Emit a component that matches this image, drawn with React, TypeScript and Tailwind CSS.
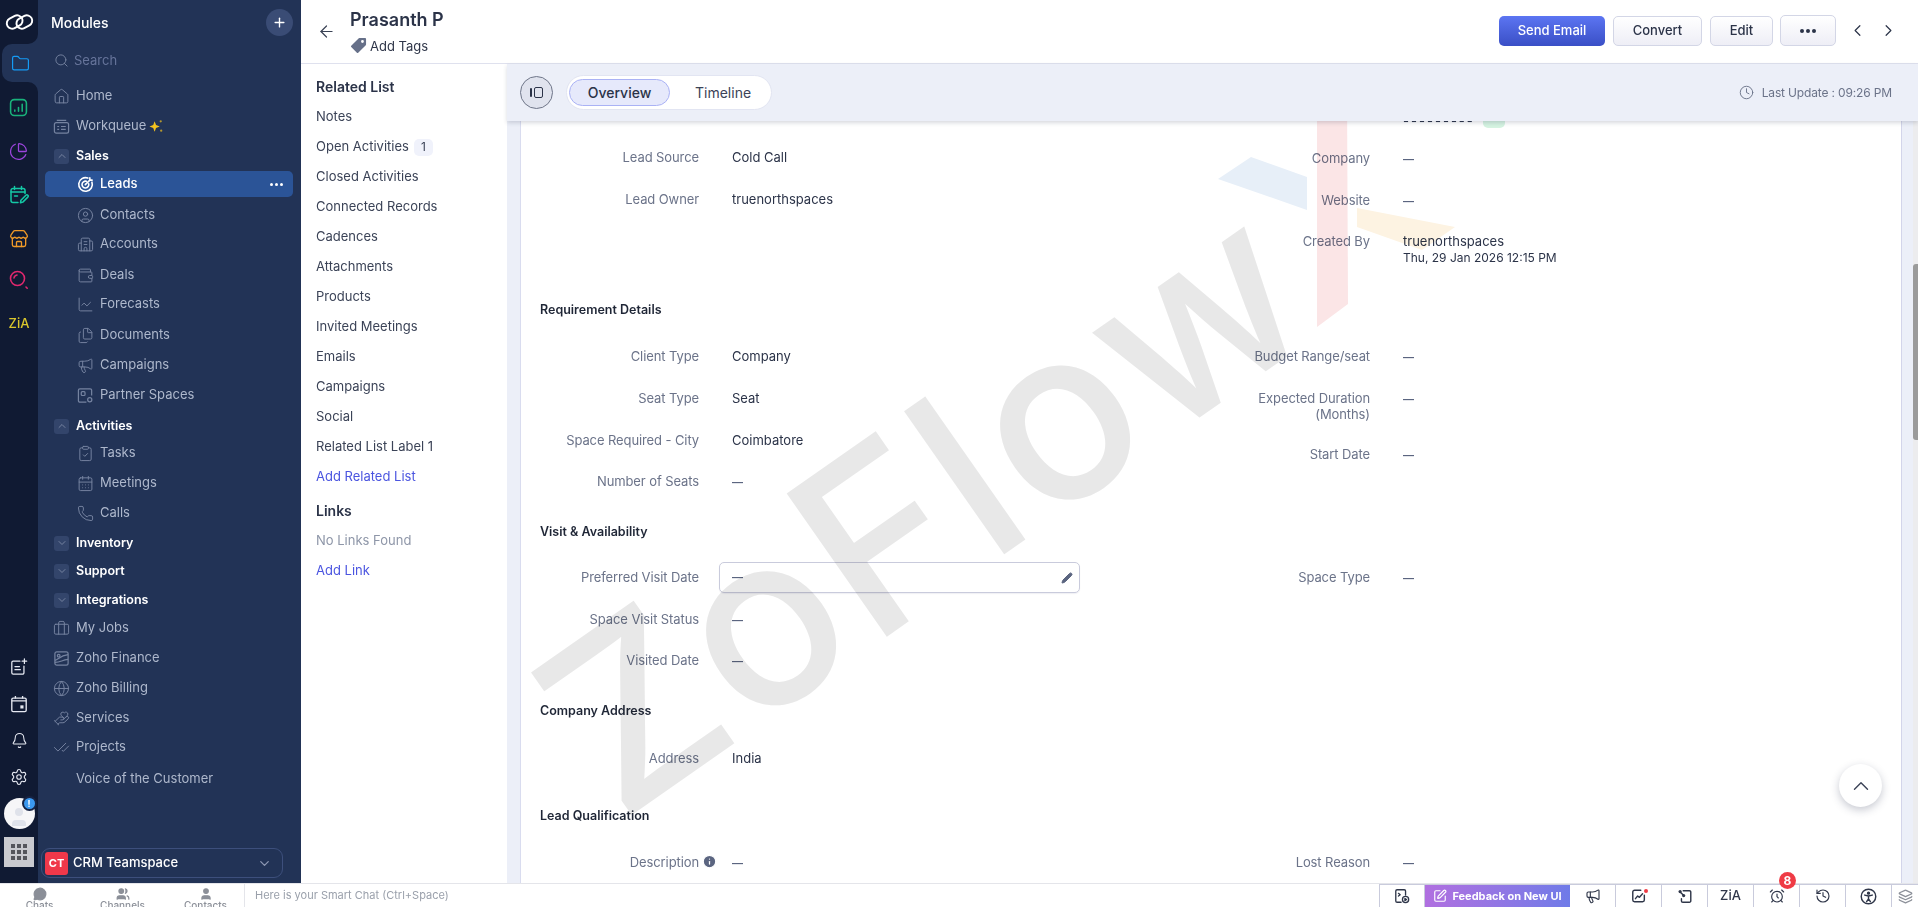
import {
  AlarmClock,
  ArrowLeft,
  Bell,
  Briefcase,
  Building2,
  CalendarDays,
  ChartLine,
  ChartPie,
  CheckCheck,
  ChevronDown,
  ChevronLeft,
  ChevronRight,
  ChevronUp,
  CircleUser,
  ClipboardCheck,
  Clock,
  Files,
  Folder,
  Globe,
  HandHeart,
  History,
  House,
  Info,
  Layers,
  Megaphone,
  MessageCircle,
  Pencil,
  Phone,
  Plus,
  Search,
  Settings,
  SquarePen,
  Store,
  User,
  Users,
  Wallet,
} from "lucide-react";
import type { ReactNode } from "react";

const font = "font-['Inter','Liberation_Sans',sans-serif]";

type NavItem = {
  label: string;
  icon?: ReactNode;
  cls?: string;
};

const iconCls = "h-[17px] w-[17px] stroke-[1.4] text-[#7583a0]";

function WorkqueueIcon() {
  return (
    <svg viewBox="0 0 18 18" className="h-[17px] w-[17px] text-[#7583a0]" fill="none" stroke="currentColor" strokeWidth="1.3">
      <path d="M4 2.500h10" />
      <rect x="1.500" y="5" width="15" height="11" rx="2" />
      <path d="M4.500 9h2M4.500 12h2M8.500 9h5M8.500 12h5" />
    </svg>
  );
}

function Sparkle() {
  return (
    <svg viewBox="0 0 16 16" className="ml-[3px] h-[15px] w-[15px] text-[#f2c21f]" fill="currentColor">
      <path d="M6 2.500 7.500 6.500 11.500 8 7.500 9.500 6 13.500 4.500 9.500 0.500 8 4.500 6.500z" />
      <circle cx="12.500" cy="2.500" r="1.200" opacity="0.7" />
      <circle cx="13" cy="12.500" r="1.200" opacity="0.7" />
    </svg>
  );
}

function LeadsIcon() {
  return (
    <svg viewBox="0 0 18 18" className="h-[17px] w-[17px] text-white" fill="none" stroke="currentColor" strokeWidth="1.700" strokeLinecap="round">
      <path d="M11.500 2.200A7.200 7.200 0 1 0 15.800 6.500" />
      <path d="M9.800 5.600A3.600 3.600 0 1 0 12.400 8.200" />
      <path d="M8.800 9.200 13.600 4.400M13.600 4.400V2M13.600 4.400H16" />
    </svg>
  );
}

function PartnerIcon() {
  return (
    <svg viewBox="0 0 18 18" className="h-[17px] w-[17px] text-[#7583a0]" fill="none" stroke="currentColor" strokeWidth="1.300">
      <path d="M10 16H3a1.500 1.500 0 0 1-1.500-1.500v-11A1.500 1.500 0 0 1 3 2h11a1.500 1.500 0 0 1 1.500 1.500V9" />
      <rect x="4.500" y="5" width="4" height="4" rx="1" />
      <circle cx="13.500" cy="13.500" r="2.200" />
    </svg>
  );
}

function FinanceIcon() {
  return (
    <svg viewBox="0 0 18 18" className="h-[17px] w-[17px] text-[#7583a0]" fill="none" stroke="currentColor" strokeWidth="1.300">
      <rect x="2" y="2" width="14" height="14" rx="2" />
      <path d="M2 11c4-1 5-5 14-6M2 13c6 0 7-2 14-3" />
      <circle cx="6" cy="6" r="1.400" />
    </svg>
  );
}

function RailChart() {
  return (
    <svg viewBox="0 0 18 18" className="h-[19px] w-[19px] text-[#19b27b]" fill="none" stroke="currentColor" strokeWidth="1.500" strokeLinecap="round">
      <rect x="1.500" y="1.500" width="15" height="15" rx="3.500" />
      <path d="M5.500 12.500v-1M9 12.500V9M12.500 12.500V6" />
    </svg>
  );
}

function RailCalendar() {
  return (
    <svg viewBox="0 0 20 20" className="h-5 w-5 text-[#14c9a6]" fill="none" stroke="currentColor" strokeWidth="1.500" strokeLinecap="round" strokeLinejoin="round">
      <path d="M9 17.500H4a2 2 0 0 1-2-2v-10a2 2 0 0 1 2-2h10a2 2 0 0 1 2 2v3" />
      <path d="M2 7h14M5.500 1.500v3M12.500 1.500v3M5.500 11h3" />
      <path d="m11.500 17.800.4-2.600 5-5a1.300 1.300 0 0 1 1.900 1.900l-5 5z" />
    </svg>
  );
}

function RailLens() {
  return (
    <svg viewBox="0 0 20 20" className="-mt-[3px] h-5 w-5 text-[#e0286e]" fill="none" stroke="currentColor" strokeWidth="1.600" strokeLinecap="round">
      <circle cx="8.500" cy="8.500" r="7" />
      <path d="M5 8a3.600 3.600 0 0 1 3-3M17 17l1.200 1.200" />
    </svg>
  );
}

function RailNote() {
  return (
    <svg viewBox="0 0 20 20" className="h-[18px] w-[18px] text-[#e6e9f2]" fill="none" stroke="currentColor" strokeWidth="1.400" strokeLinecap="round">
      <path d="M11 3.500H3.500a1.500 1.500 0 0 0-1.500 1.500v11.500A1.500 1.500 0 0 0 3.500 18H14a1.500 1.500 0 0 0 1.500-1.500V9" />
      <path d="M5.500 9.500h5M5.500 13h6M16 1v5M13.500 3.500h5" />
    </svg>
  );
}

function RailEvent() {
  return (
    <svg viewBox="0 0 20 20" className="h-[18px] w-[18px] text-[#e6e9f2]" fill="none" stroke="currentColor" strokeWidth="1.500">
      <rect x="2" y="3.500" width="16" height="15" rx="1.500" />
      <path d="M2 6.500h16M6 1v3M14 1v3" />
      <rect x="11.500" y="11.500" width="3.500" height="3.500" fill="currentColor" stroke="none" />
    </svg>
  );
}

function ZohoLogo() {
  return (
    <svg viewBox="0 0 30 20" className="h-[20px] w-[29px] text-white" fill="none" stroke="currentColor" strokeWidth="2">
      <rect x="1.500" y="4.500" width="17" height="11" rx="5.500" transform="rotate(-28 10 10)" />
      <rect x="11.500" y="4.500" width="17" height="11" rx="5.500" transform="rotate(-28 20 10)" />
    </svg>
  );
}

function TagIcon() {
  return (
    <svg viewBox="0 0 18 18" className="mr-[3px] h-[17px] w-[17px] fill-[#667089]">
      <path d="M10 1h6a1 1 0 0 1 1 1v6a1 1 0 0 1-.3.7l-8 8a1 1 0 0 1-1.400 0l-6-6a1 1 0 0 1 0-1.400l8-8A1 1 0 0 1 10 1zm3.200 2.300a1.500 1.500 0 1 0 0 3 1.500 1.500 0 0 0 0-3z" fillRule="evenodd" />
    </svg>
  );
}

const railTop = [
  <RailChart key="chart" />,
  <ChartPie key="pie" className="mt-[1px] h-[19px] w-[19px] stroke-[1.6] text-[#9b45dc]" />,
  <RailCalendar key="calendar" />,
  <Store key="store" className="h-5 w-5 stroke-[1.6] text-[#f09a28]" />,
  <RailLens key="lens" />,
];

const navTop: NavItem[] = [
  { label: "Home", icon: <House className={iconCls} /> },
  { label: "Workqueue", icon: <WorkqueueIcon /> },
];

const sales: NavItem[] = [
  { label: "Contacts", icon: <CircleUser className={iconCls} />, cls: "-mt-px" },
  { label: "Accounts", icon: <Building2 className={iconCls} />, cls: "-mt-px" },
  { label: "Deals", icon: <Wallet className={iconCls} />, cls: "mt-px" },
  { label: "Forecasts", icon: <ChartLine className={iconCls} />, cls: "-mt-px" },
  { label: "Documents", icon: <Files className={iconCls} />, cls: "mt-px" },
  { label: "Campaigns", icon: <Megaphone className={iconCls} /> },
  { label: "Partner Spaces", icon: <PartnerIcon /> },
];

const activities: NavItem[] = [
  { label: "Tasks", icon: <ClipboardCheck className={iconCls} />, cls: "-mt-[4px]" },
  { label: "Meetings", icon: <CalendarDays className={iconCls} /> },
  { label: "Calls", icon: <Phone className={iconCls} /> },
];

const navBottom: NavItem[] = [
  { label: "My Jobs", icon: <Briefcase className={iconCls} />, cls: "-mt-[3px]" },
  { label: "Zoho Finance", icon: <FinanceIcon /> },
  { label: "Zoho Billing", icon: <Globe className={iconCls} /> },
  { label: "Services", icon: <HandHeart className={iconCls} /> },
  { label: "Projects", icon: <CheckCheck className={iconCls} />, cls: "-mt-px" },
  { label: "Voice of the Customer", cls: "mt-[2px]" },
];

const relatedList = [
  "Notes",
  "Open Activities",
  "Closed Activities",
  "Connected Records",
  "Cadences",
  "Attachments",
  "Products",
  "Invited Meetings",
  "Emails",
  "Campaigns",
  "Social",
  "Related List Label 1",
];

function TopItem({ item, extra }: { item: NavItem; extra?: ReactNode }) {
  return (
    <div className={`flex h-[30px] items-center pt-[2px] ${item.cls ?? ""}`}>
      <span className="flex w-[18px] justify-center">{item.icon}</span>
      <span className="ml-[6px] text-[13px] text-[#aeb8cc]">{item.label}</span>
      {extra}
    </div>
  );
}

function SubItem({ item }: { item: NavItem }) {
  return (
    <div className={`flex h-[30px] items-center pl-[24px] pt-[2px] ${item.cls ?? ""}`}>
      <span className="flex w-[18px] justify-center">{item.icon}</span>
      <span className="ml-[6px] text-[13px] text-[#aeb8cc]">{item.label}</span>
    </div>
  );
}

function GroupItem({ label, open, cls }: { label: string; open?: boolean; cls?: string }) {
  return (
    <div className={`flex h-[30px] items-center ${cls ?? ""}`}>
      <span className="ml-[2px] flex h-[15px] w-[15px] items-center justify-center rounded-[3px] bg-[#33456b]">
        {open ? (
          <ChevronUp className="h-3 w-3 text-[#7583a0]" />
        ) : (
          <ChevronDown className="h-3 w-3 text-[#7583a0]" />
        )}
      </span>
      <span className="ml-[7px] text-[12.5px] font-semibold text-white">{label}</span>
    </div>
  );
}

function Sidebar() {
  return (
    <aside className="flex h-full w-[263px] flex-col bg-[#223356]">
      <div className="flex h-[44px] items-center justify-between pl-[13px] pr-[8px]">
        <span className="text-[14px] font-medium text-white">Modules</span>
        <span className="flex h-[27px] w-[27px] items-center justify-center rounded-full bg-[#3a4c75]">
          <Plus className="h-[15px] w-[15px] stroke-[2.2] text-white" />
        </span>
      </div>
      <div className="flex h-[32px] items-center pl-[16px] pt-[1px]">
        <Search className="h-[15px] w-[15px] stroke-[1.5] text-[#7583a0]" />
        <span className="ml-[5px] text-[13px] text-[#66749a]">Search</span>
      </div>
      <div className="flex flex-1 flex-col pl-[14px] pt-[4px]">
        {navTop.map((item) => (
          <TopItem
            key={item.label}
            item={item}
            extra={item.label === "Workqueue" ? <Sparkle /> : undefined}
          />
        ))}
        <GroupItem label="Sales" open cls="mt-px" />
        <div className="-ml-[7px] mb-[3px] mr-[8px] flex h-[26px] items-center rounded-[5px] bg-[#2b5497] pl-[31px]">
          <span className="flex w-[18px] justify-center">
            <LeadsIcon />
          </span>
          <span className="ml-[6px] text-[13px] font-medium text-white">Leads</span>
          <span className="ml-auto mr-[10px] flex gap-[2px]">
            <span className="h-[3px] w-[3px] rounded-full bg-white" />
            <span className="h-[3px] w-[3px] rounded-full bg-white" />
            <span className="h-[3px] w-[3px] rounded-full bg-white" />
          </span>
        </div>
        {sales.map((item) => (
          <SubItem key={item.label} item={item} />
        ))}
        <GroupItem label="Activities" open cls="mt-[2px]" />
        {activities.map((item) => (
          <SubItem key={item.label} item={item} />
        ))}
        <GroupItem label="Inventory" cls="mt-px" />
        <GroupItem label="Support" cls="-mt-[2px]" />
        <GroupItem label="Integrations" cls="-mt-px" />
        {navBottom.map((item) => (
          <TopItem key={item.label} item={item} />
        ))}
      </div>
      <div className="mb-[5px] ml-[3px] flex h-[30px] w-[242px] items-center rounded-[9px] border border-[#3d4f7c] pl-[3px] pr-[10px]">
        <span className="flex h-[23px] w-[23px] items-center justify-center rounded-[3px] bg-[#f0384a] text-[11px] font-bold text-white">
          CT
        </span>
        <span className="ml-[5px] text-[13px] font-medium text-white">CRM Teamspace</span>
        <ChevronDown className="ml-auto h-[15px] w-[15px] text-[#8d98b3]" />
      </div>
    </aside>
  );
}

function Rail() {
  return (
    <nav className="flex h-full w-[38px] flex-col bg-[#223356]">
      <div className="flex h-[44px] items-center justify-center rounded-br-[10px] bg-[#101a33]">
        <ZohoLogo />
      </div>
      <div className="bg-[#101a33]">
        <div className="ml-[2px] flex h-[38px] items-center justify-center rounded-l-[10px] bg-[#223356]">
          <Folder className="h-[19px] w-[19px] stroke-[1.5] text-[#159bf5]" />
        </div>
      </div>
      <div className="flex flex-1 flex-col items-center rounded-tr-[10px] bg-[#101a33]">
        <div className="mt-[16px] flex flex-col items-center gap-[24px]">
          {railTop}
          <span className="mt-[3px] text-[13px] font-medium leading-none text-[#d9c62c]">ZiA</span>
        </div>
        <div className="mt-auto flex flex-col items-center">
          <div className="flex flex-col items-center gap-[19px]">
            <RailNote />
            <RailEvent />
            <Bell className="h-[17px] w-[17px] stroke-[1.5] text-[#e6e9f2]" />
            <Settings className="h-[18px] w-[18px] stroke-[1.5] text-[#e6e9f2]" />
          </div>
          <div className="relative mt-[12px] flex h-[31px] w-[31px] items-end justify-center rounded-full bg-[#f6f6f8]">
            <User className="h-[24px] w-[24px] fill-[#dfe2ea] stroke-none" />
            <span className="absolute -right-[2px] -top-[2px] flex h-[15px] w-[15px] items-center justify-center rounded-full border-[2px] border-[#172444] bg-[#3b99f0] text-[9px] font-bold leading-none text-white">
              !
            </span>
          </div>
          <div className="mb-[16px] mt-[8px] grid h-[30px] w-[30px] grid-cols-3 content-center justify-center gap-[2px] bg-[#c9cacf] px-[7px]">
            {[0, 1, 2, 3, 4, 5, 6, 7, 8].map((n) => (
              <span key={n} className="h-[4px] w-[4px] bg-[#55565c]" />
            ))}
          </div>
        </div>
      </div>
    </nav>
  );
}

function Header() {
  return (
    <header className="flex h-[64px] shrink-0 items-center border-b border-[#dfe1ee] bg-white pl-[16px] pr-[20px]">
      <ArrowLeft className="h-[19px] w-[19px] stroke-[1.5] text-[#3a4255]" />
      <div className="ml-[14px] flex flex-col">
        <span className="-mt-[1px] text-[18px] font-semibold leading-[24px] text-[#2b3348]">Prasanth P</span>
        <span className="mt-[5px] flex items-center text-[13px] leading-[18px] text-[#2f3649]">
          <TagIcon />
          Add Tags
        </span>
      </div>
      <div className="ml-auto flex items-center pb-[2px]">
        <button className="h-[30px] w-[106px] rounded-[5px] bg-gradient-to-b from-[#5c75f2] to-[#3a4fc6] text-[13px] font-medium text-white">
          Send Email
        </button>
        <button className="ml-[8px] h-[30px] w-[89px] rounded-[5px] border border-[#d3d6e6] bg-gradient-to-b from-white to-[#eeeef6] text-[13px] font-medium text-[#2b3348]">
          Convert
        </button>
        <button className="ml-[8px] h-[30px] w-[63px] rounded-[5px] border border-[#d3d6e6] bg-gradient-to-b from-white to-[#eeeef6] text-[13px] font-medium text-[#2b3348]">
          Edit
        </button>
        <button className="ml-[7px] flex h-[31px] w-[56px] items-center justify-center gap-[2px] rounded-[5px] border border-[#d3d6e6] bg-gradient-to-b from-white to-[#eeeef6]">
          <span className="h-[4px] w-[4px] rounded-full bg-[#2b3348]" />
          <span className="h-[4px] w-[4px] rounded-full bg-[#2b3348]" />
          <span className="h-[4px] w-[4px] rounded-full bg-[#2b3348]" />
        </button>
        <ChevronLeft className="ml-[12px] h-[19px] w-[19px] stroke-[1.5] text-[#2b3348]" />
        <ChevronRight className="ml-[12px] h-[19px] w-[19px] stroke-[1.5] text-[#2b3348]" />
      </div>
    </header>
  );
}

function RelatedList() {
  return (
    <div className="w-[206px] shrink-0 bg-white pl-[15px] pt-[12px] text-[13px] text-[#3b4357]">
      <div className="flex h-[20px] items-center text-[14px] font-semibold text-[#2b3348]">Related List</div>
      <div className="mt-[6px]">
        {relatedList.map((name) => (
          <div key={name} className="flex h-[30px] items-center">
            {name}
            {name === "Open Activities" && (
              <span className="ml-[5px] flex h-[17px] w-[19px] items-center justify-center rounded-[5px] bg-[#f0f2fb] text-[12px]">
                1
              </span>
            )}
          </div>
        ))}
        <div className="flex h-[30px] items-center text-[#4b55e0]">Add Related List</div>
      </div>
      <div className="mt-[3px] flex h-[31px] items-center text-[14px] font-semibold text-[#2b3348]">Links</div>
      <div className="flex h-[30px] items-center text-[#8e96a8]">No Links Found</div>
      <div className="flex h-[30px] items-center text-[#4b55e0]">Add Link</div>
    </div>
  );
}

function TabBar() {
  return (
    <div className="relative z-10 flex h-[57px] shrink-0 items-center bg-[#eceff8] pl-[13px] pr-[26px] shadow-[0_2px_4px_rgba(40,50,80,0.18)]">
      <span className="flex h-[33px] w-[33px] items-center justify-center rounded-full border border-[#6f7689] bg-[#e0e3ee]">
        <span className="h-[9px] w-[2px] rounded-sm bg-[#2b3348]" />
        <span className="ml-[2px] h-[11px] w-[9px] rounded-[2px] border-[1.5px] border-[#2b3348]" />
      </span>
      <div className="ml-[13px] flex h-[35px] w-[206px] items-center rounded-full border border-[#e2e5f2] bg-white px-[2px]">
        <span className="flex h-[27px] w-[101px] items-center justify-center rounded-full border border-[#aab2f5] bg-[#e6e9fb] text-[14px] font-medium text-[#2b3348]">
          Overview
        </span>
        <span className="ml-[25px] text-[14px] text-[#3b4357]">Timeline</span>
      </div>
      <div className="ml-auto flex items-center text-[12px] tracking-[-0.15px] text-[#6b7389]">
        <Clock className="mr-[8px] h-[15px] w-[15px] stroke-[1.5]" />
        Last Update : 09:26 PM
      </div>
    </div>
  );
}

function Dash() {
  return <span className="text-[11px] font-semibold text-[#5b6580]">—</span>;
}

function Field({
  label,
  children,
  boxed,
  info,
  cls,
}: {
  label: ReactNode;
  children?: ReactNode;
  boxed?: boolean;
  info?: boolean;
  cls?: string;
}) {
  return (
    <div className={`relative flex items-start ${cls ?? "h-[42px]"}`}>
      <div className="flex w-[178px] justify-end pt-[13px] text-right text-[13px] leading-[16px] tracking-[-0.1px] text-[#6b7389]">
        {label}
      </div>
      {info && (
        <Info className="absolute left-[181px] top-[13px] h-[15px] w-[15px] fill-[#5b6580] text-white" />
      )}
      {boxed ? (
        <div className="ml-[20px] mt-[6px] flex h-[31px] w-[361px] items-center justify-between rounded-[5px] border border-[#c9cbdc] pl-[12px] pr-[6px] shadow-[0_1px_1px_rgba(60,70,110,0.08)]">
          <Dash />
          <Pencil className="h-[12px] w-[12px] fill-[#5b6580] text-[#5b6580]" />
        </div>
      ) : (
        <div className="ml-[33px] pt-[13px] text-[13px] leading-[16px] text-[#2b3348]">
          {children ?? <Dash />}
        </div>
      )}
    </div>
  );
}

function Heading({ children, cls }: { children: ReactNode; cls?: string }) {
  return (
    <div className={`flex h-[20px] items-center pl-[19px] text-[12.5px] font-semibold text-[#1f2636] ${cls ?? ""}`}>
      {children}
    </div>
  );
}

function Details() {
  return (
    <div className="relative flex-1 overflow-hidden bg-white">
      {/* last row of the block above, cut off by the tab bar */}
      <div className="absolute left-[882px] top-[-6px] flex items-center">
        <span className="text-[13px] leading-none tracking-[2px] text-[#2b3348]">---------</span>
        <span className="ml-[8px] h-[13px] w-[22px] rounded-[5px] bg-[#d5f3e1]" />
      </div>
      <div className="pt-[15px]">
        <div className="grid grid-cols-[671px_671px]">
          <div>
            <Field label="Lead Source">Cold Call</Field>
            <Field label="Lead Owner">truenorthspaces</Field>
          </div>
          <div className="pt-px">
            <Field label="Company" />
            <Field label="Website" />
            <Field label="Created By" cls="-mt-[1px] h-[59px]">
              truenorthspaces
              <br />
              <span className="text-[12px]">Thu, 29 Jan 2026 12:15 PM</span>
            </Field>
          </div>
        </div>
        <Heading cls="mb-[15px] mt-[21px]">Requirement Details</Heading>
        <div className="grid grid-cols-[671px_671px]">
          <div>
            <Field label="Client Type">Company</Field>
            <Field label="Seat Type">Seat</Field>
            <Field label="Space Required - City" cls="h-[41px]">Coimbatore</Field>
            <Field label="Number of Seats" />
          </div>
          <div>
            <Field label="Budget Range/seat" />
            <Field
              label={
                <span>
                  Expected Duration
                  <br />
                  (Months)
                </span>
              }
              cls="h-[56px]"
            />
            <Field label="Start Date" />
          </div>
        </div>
        <Heading cls="mb-[14px] mt-[20px]">Visit &amp; Availability</Heading>
        <div className="grid grid-cols-[671px_671px]">
          <div>
            <Field label="Preferred Visit Date" boxed />
            <Field label="Space Visit Status" cls="h-[41px]" />
            <Field label="Visited Date" />
          </div>
          <div>
            <Field label="Space Type" />
          </div>
        </div>
        <Heading cls="mb-[16px] mt-[20px]">Company Address</Heading>
        <Field label="Address">India</Field>
        <Heading cls="mb-[15px] mt-[27px]">Lead Qualification</Heading>
        <div className="grid grid-cols-[671px_671px]">
          <Field label="Description" info />
          <Field label="Lost Reason" />
        </div>
      </div>
      <span className="absolute right-[19px] top-[643px] flex h-[43px] w-[43px] items-center justify-center rounded-full bg-white shadow-[0_3px_8px_rgba(30,40,70,0.25)]">
        <ChevronUp className="h-[26px] w-[26px] stroke-[1.3] text-[#3b4357]" />
      </span>
    </div>
  );
}

function Watermark() {
  return (
    <div className="pointer-events-none absolute inset-x-0 top-0 h-[883px] overflow-hidden mix-blend-multiply">
      <div className="absolute left-[501px] top-[654px] origin-top-left -rotate-[35deg] whitespace-nowrap text-[240px] font-medium leading-none tracking-[4px] text-[#e8e8e8]">
        ZoFlow
      </div>
      <svg viewBox="0 0 1918 883" className="absolute inset-0 h-[883px] w-[1918px]">
        <polygon points="1317,108 1347,87 1348,304 1317,327" fill="#fbe5e6" />
        <polygon points="1218,179 1251,157 1307,177 1307,210" fill="#e7eff8" />
        <polygon points="1357,208 1455,227 1422,250 1357,227" fill="#fdf3e2" />
      </svg>
    </div>
  );
}

function ChatItem({ icon, label }: { icon: ReactNode; label: string }) {
  return (
    <div className="flex w-[83px] flex-col items-center leading-none">
      {icon}
      <span className="-mt-[1px] text-[10px] font-medium leading-[10px] text-[#8b8f98]">{label}</span>
    </div>
  );
}

const dockCls = "h-[16px] w-[16px] stroke-[1.7] text-[#2f3649]";

function DockMedia() {
  return (
    <svg viewBox="0 0 18 18" className="h-[16px] w-[16px] text-[#2f3649]" fill="none" stroke="currentColor" strokeWidth="1.500" strokeLinecap="round" strokeLinejoin="round">
      <path d="M8 16H3.500A1.500 1.500 0 0 1 2 14.500v-11A1.500 1.500 0 0 1 3.500 2h8A1.500 1.500 0 0 1 13 3.500V8" />
      <path d="m5 6 2 1.500L5 9" />
      <circle cx="13" cy="13" r="3.500" />
      <path d="m12.300 11.800 1.800 1.200-1.800 1.200z" fill="currentColor" />
    </svg>
  );
}

function DockChart() {
  return (
    <svg viewBox="0 0 18 18" className="h-[16px] w-[16px] text-[#2f3649]" fill="none" stroke="currentColor" strokeWidth="1.600" strokeLinecap="round" strokeLinejoin="round">
      <path d="M11 2.500H4A2 2 0 0 0 2 4.500v9A2 2 0 0 0 4 15.500h9a2 2 0 0 0 2-2V8" />
      <path d="m5 12 2.500-3 2 1.500L13 6.500" />
    </svg>
  );
}

function DockNodes() {
  return (
    <svg viewBox="0 0 18 18" className="h-[16px] w-[16px] text-[#2f3649]" fill="none" stroke="currentColor" strokeWidth="1.600" strokeLinecap="round">
      <path d="M7 3h7a1.500 1.500 0 0 1 1.500 1.500v10A1.500 1.500 0 0 1 14 16H6.500A1.500 1.500 0 0 1 5 14.500V12" />
      <path d="m3.500 4.500 3.500 3.500" />
      <circle cx="3.500" cy="4" r="1.800" fill="currentColor" stroke="none" />
      <circle cx="7.500" cy="8.500" r="1.800" fill="currentColor" stroke="none" />
    </svg>
  );
}

function DockPerson() {
  return (
    <svg viewBox="0 0 18 18" className="h-[17px] w-[17px] text-[#2f3649]" fill="none" stroke="currentColor" strokeWidth="1.500" strokeLinecap="round" strokeLinejoin="round">
      <circle cx="9" cy="9" r="7.700" />
      <circle cx="9" cy="5.500" r="1" fill="currentColor" />
      <path d="M5 7.500 9 8.500l4-1M9 8.500v3M9 11.500l-2 3M9 11.500l2 3" />
    </svg>
  );
}

function DockCell({ children, cls }: { children: ReactNode; cls?: string }) {
  return (
    <span className={`relative flex h-full w-[46px] items-center justify-center border-r border-[#c9cbdc] ${cls ?? ""}`}>
      {children}
    </span>
  );
}

function BottomBar() {
  return (
    <footer className="relative z-20 flex h-[24px] shrink-0 items-start border-t border-[#e4e5ea] bg-white">
      <div className="flex h-full w-[244px] items-start overflow-hidden pt-[3px]">
        <div className="-ml-[2px] flex">
          <ChatItem icon={<MessageCircle className="h-[14px] w-[14px] fill-[#8b8f98] text-[#8b8f98]" />} label="Chats" />
          <ChatItem icon={<Users className="h-[14px] w-[14px] fill-[#8b8f98] text-[#8b8f98]" />} label="Channels" />
          <ChatItem icon={<User className="h-[14px] w-[14px] fill-[#8b8f98] text-[#8b8f98]" />} label="Contacts" />
        </div>
      </div>
      <div className="flex h-full items-center border-l border-[#e4e5ea] pl-[10px] text-[11px] text-[#9aa0ab]">
        Here is your Smart Chat (Ctrl+Space)
      </div>
      <div className="ml-auto flex h-full items-center border-t border-[#c9cbdc]">
        <DockCell cls="border-l">
          <DockMedia />
        </DockCell>
        <span className="flex h-full w-[145px] items-center justify-center gap-[5px] bg-gradient-to-r from-[#b06fe0] to-[#6f7be8] text-[11px] font-bold text-white">
          <SquarePen className="h-[14px] w-[14px] stroke-[2]" />
          Feedback on New UI
        </span>
        <DockCell>
          <Megaphone className={dockCls} />
        </DockCell>
        <DockCell>
          <DockChart />
          <span className="absolute right-[13px] top-[4px] h-[4px] w-[4px] rounded-full bg-[#ef3b45]" />
        </DockCell>
        <DockCell>
          <DockNodes />
        </DockCell>
        <DockCell>
          <span className="text-[13px] font-medium text-[#2f3649]">ZiA</span>
        </DockCell>
        <DockCell>
          <AlarmClock className={dockCls} />
          <span className="absolute left-[25px] top-[-13px] flex h-[17px] w-[17px] items-center justify-center rounded-full bg-[#ef3b45] text-[12px] font-bold text-white">
            8
          </span>
        </DockCell>
        <DockCell>
          <History className={dockCls} />
        </DockCell>
        <DockCell>
          <DockPerson />
        </DockCell>
        <span className="flex h-full w-[26px] items-center justify-center">
          <Layers className="h-[15px] w-[15px] text-[#8b8f98]" />
        </span>
      </div>
    </footer>
  );
}

export default function App() {
  return (
    <div className={`relative flex h-screen w-full flex-col overflow-hidden bg-white ${font}`}>
      <div className="flex min-h-0 flex-1">
        <Rail />
        <Sidebar />
        <main className="flex min-w-0 flex-1 flex-col">
          <Header />
          <div className="flex min-h-0 flex-1">
            <RelatedList />
            <div className="flex min-w-0 flex-1 flex-col bg-[#eceff8]">
              <TabBar />
              <div className="flex min-h-0 flex-1 pl-[13px]">
                <div className="flex min-w-0 flex-1 border-l border-[#d9dcef]">
                  <Details />
                </div>
                <div className="flex w-[17px] shrink-0 justify-end border-l border-[#d3d5ea]">
                  <div className="w-[5px] bg-[#ececee] pt-[143px]">
                    <div className="h-[176px] rounded-l-[3px] bg-[#9b9b9b]" />
                  </div>
                </div>
              </div>
            </div>
          </div>
        </main>
      </div>
      <BottomBar />
      <Watermark />
    </div>
  );
}
